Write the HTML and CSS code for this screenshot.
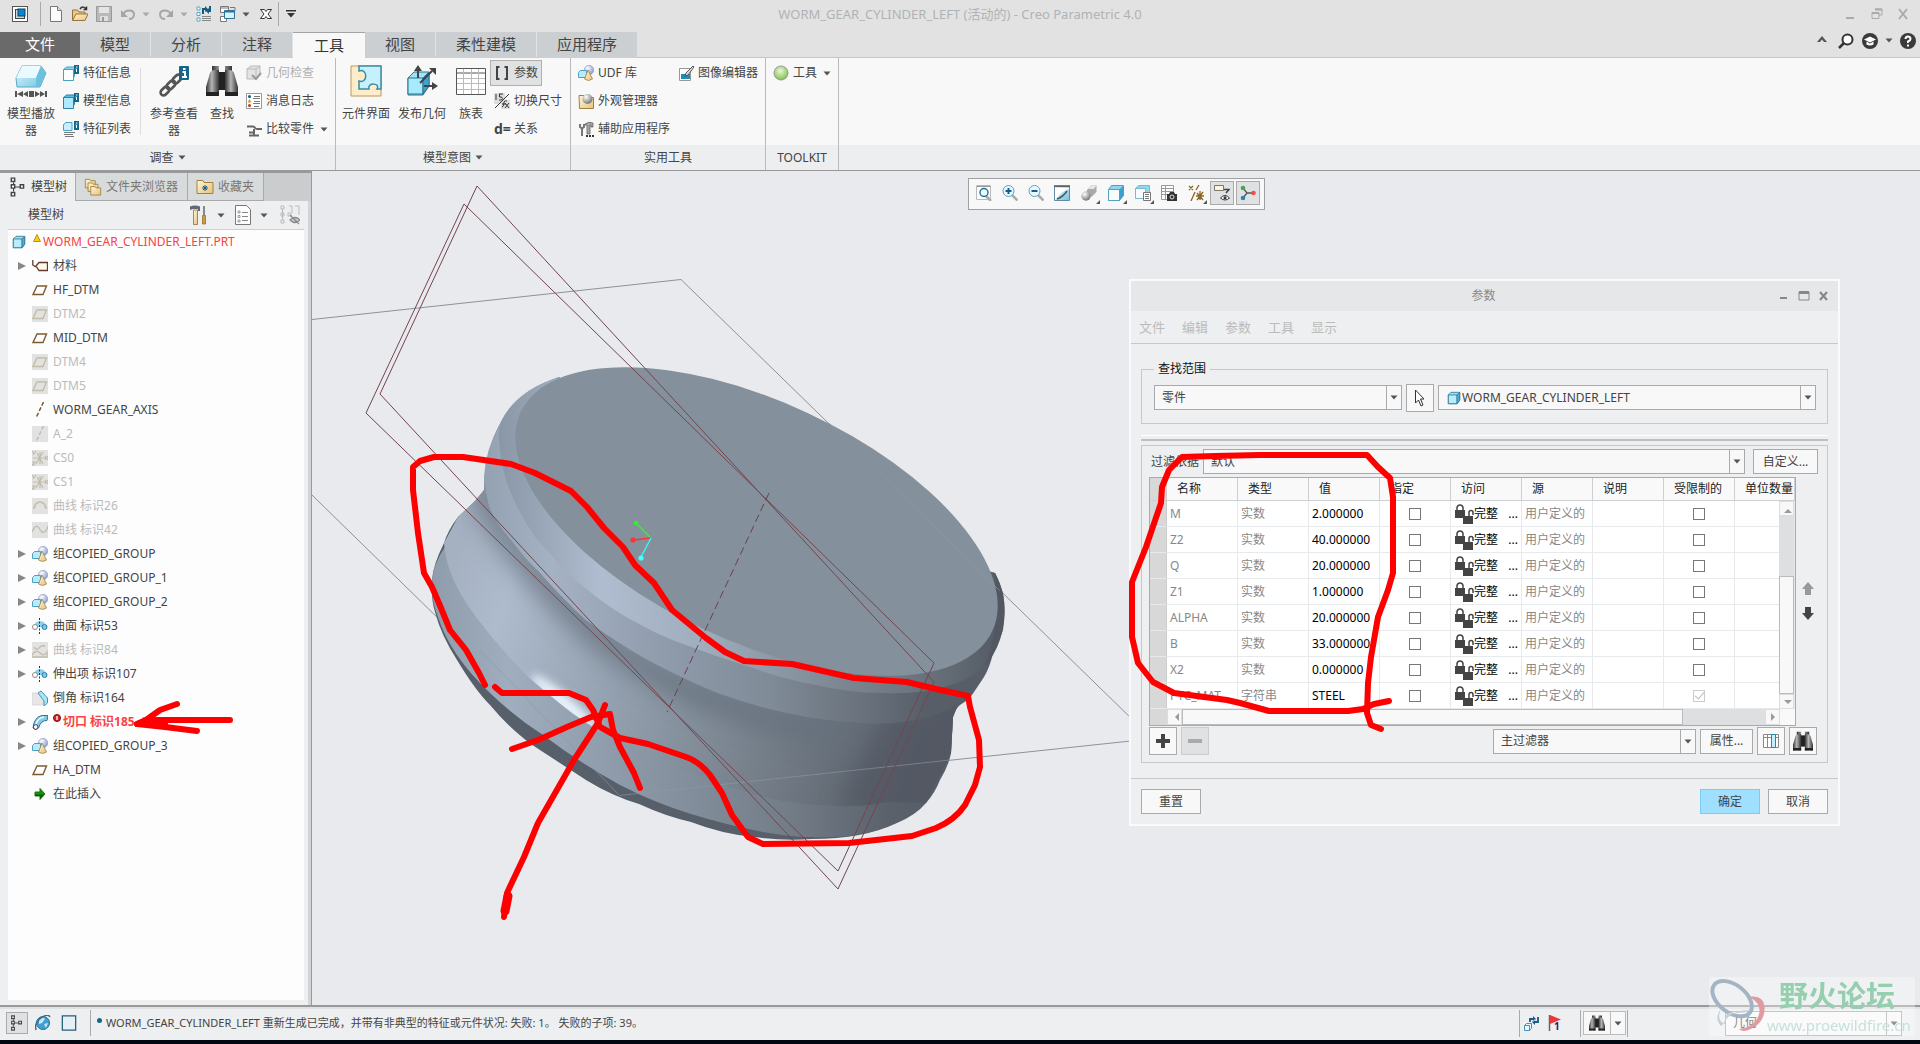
FILE: index.html
```html
<!DOCTYPE html>
<html lang="zh-CN">
<head>
<meta charset="utf-8">
<title>WORM_GEAR_CYLINDER_LEFT (活动的) - Creo Parametric 4.0</title>
<link rel="stylesheet" href="styles.css">
</head>
<body>
<svg class="defs" aria-hidden="true">
  <defs>
    <linearGradient id="gBlue" x1="0" y1="0" x2="1" y2="1"><stop offset="0" stop-color="#e4f8ff"/><stop offset="1" stop-color="#6fc4e4"/></linearGradient>
    <linearGradient id="gGold" x1="0" y1="0" x2="1" y2="1"><stop offset="0" stop-color="#fff6dc"/><stop offset="1" stop-color="#e6c27a"/></linearGradient>
    <linearGradient id="gDark" x1="0" y1="0" x2="1" y2="0"><stop offset="0" stop-color="#333"/><stop offset=".45" stop-color="#b5b5b5"/><stop offset="1" stop-color="#333"/></linearGradient>
    <radialGradient id="gBall" cx=".35" cy=".3" r=".8"><stop offset="0" stop-color="#fff"/><stop offset="1" stop-color="#7f93c8"/></radialGradient>
    <radialGradient id="gGrey" cx=".35" cy=".3" r=".8"><stop offset="0" stop-color="#fff"/><stop offset="1" stop-color="#666"/></radialGradient>
    <radialGradient id="gGreen" cx=".45" cy=".35" r=".7"><stop offset="0" stop-color="#e9f9d2"/><stop offset="1" stop-color="#79bb4a"/></radialGradient>
  </defs>
  <symbol id="app" viewBox="0 0 16 16"><rect x=".5" y=".5" width="15" height="15" fill="#fff" stroke="#555"/><rect x="3.5" y="3.5" width="9" height="9" fill="#cfd6da" stroke="#444"/><rect x="6" y="3" width="7" height="7" fill="#0a84d6" stroke="#045"/></symbol>
  <symbol id="new" viewBox="0 0 16 16"><path d="M2.500.5h7l4 4v11h-11z" fill="#fafbfc" stroke="#777"/><path d="M9.500.5v4h4" fill="#dde2e6" stroke="#777"/></symbol>
  <symbol id="open" viewBox="0 0 16 16"><path d="M.5 14V4h5l1.500 2h6v8z" fill="#e8c98a" stroke="#9a7436"/><path d="M.5 14.500 4 8h12l-3 6.500z" fill="url(#gGold)" stroke="#9a7436"/><path d="M8 3c2-3 5-2 6 0M14.500.5v3h-3" fill="none" stroke="#333" stroke-width="1.500"/></symbol>
  <symbol id="save" viewBox="0 0 16 16"><path d="M.5.5h15v15h-15z" fill="#b9b9b9" stroke="#999"/><path d="M3 1h10v6H3z" fill="#e4e4e4"/><path d="M4 10h8v5H4z" fill="#dedede"/><path d="M6 11h2v4H6z" fill="#999"/></symbol>
  <symbol id="undo" viewBox="0 0 16 16"><path d="M3 8.500C5 3 14 3 14 8.500c0 3-2.500 4.500-5 4.500" fill="none" stroke="#a3a6a8" stroke-width="2"/><path d="M1 4v7h7z" fill="#a3a6a8"/></symbol>
  <symbol id="regen" viewBox="0 0 16 16"><path d="M1 1h3v3H1zM1 6.500h3v3H1zM1 12h3v3H1z" fill="#fff" stroke="#55a8c8"/><path d="M6 10.500h9M6 12.500h9M6 14.500h9" stroke="#888"/><path d="M7 8V3h3M14 0v5h-3" fill="none" stroke="#155a80" stroke-width="2"/><path d="m9 0 3 3-3 3zM13 2l-3 3 3 3z" fill="#155a80"/></symbol>
  <symbol id="wins" viewBox="0 0 16 16"><path d="M.5.5h8v6h-8zM.5 10.500h6v5h-6z" fill="#fff" stroke="#777"/><path d="M10 1.500h5v3M.5 2h8" fill="none" stroke="#777"/><path d="M4.500 4.500h10v8h-10z" fill="#d9f3fc" stroke="#2e7595"/><path d="M4.500 5.500h10" stroke="#2e7595" stroke-width="2"/></symbol>
  <symbol id="xbox" viewBox="0 0 12 12"><path d="M.5 1.500h4l1.500 2 1.500-2h4L8 6l3.500 4.500h-4L6 8.500l-1.500 2h-4L4 6z" fill="#fff" stroke="#333"/></symbol>
  <symbol id="down" viewBox="0 0 8 5"><path d="M.5.5h7L4 4.500z" fill="currentColor"/></symbol>
  <symbol id="downbar" viewBox="0 0 10 8"><path d="M0 0h10v1.500H0zM1 3h8L5 7.500z" fill="#333"/></symbol>
  <symbol id="box" viewBox="0 0 16 16"><path d="m1.500 4.500 3-3h10v9l-3 4h-10z" fill="#9fe0f6" stroke="#3a7a98"/><path d="M1.500 4.500h10v10h-10z" fill="#b9edfd" stroke="#3a7a98"/><path d="m11.500 4.500 3-3v9l-3 4z" fill="#4fb0d8" stroke="#3a7a98"/></symbol>
  <symbol id="inf" viewBox="0 0 16 16"><path d="m.5 4.500 3-2.500h8v9l-2.500 4.500H.5z" fill="#8fd4ee" stroke="#48a0c4"/><path d="M.5 4.500h10v11H.5z" fill="#fdfeff" stroke="#48a0c4"/><rect x="11" width="5" height="9" fill="#16658a"/><path d="M13 2h1.500M12.500 4h1v3" stroke="#fff"/></symbol>
  <symbol id="inf2" viewBox="0 0 16 16"><path d="m.5 4.500 3-2.500h8v9l-2.500 4.500H.5z" fill="#5bbbe0" stroke="#2e83a6"/><path d="M.5 4.500h10v11H.5z" fill="#aeeafc" stroke="#2e83a6"/><rect x="11" width="5" height="9" fill="#16658a"/><path d="M13 2h1.500M12.500 4h1v3" stroke="#fff"/></symbol>
  <symbol id="inf3" viewBox="0 0 16 16"><path d="M.5 3.500 3 1.500h6v8H.5z" fill="#c8eefa" stroke="#48a0c4"/><path d="M1 11.500h11M1 13.500h9M2 15.500h9" stroke="#777"/><rect x="11" width="5" height="9" fill="#16658a"/><path d="M13 2h1.500M12.500 4h1v3" stroke="#fff"/></symbol>
  <symbol id="player" viewBox="0 0 32 32"><path d="M1 13 7 1h19l5 7-6 14H2z" fill="url(#gBlue)" stroke="#5ba9c6"/><path d="m1 13 6-12h19l-5 12z" fill="#eafaff"/><path d="M21 13 26 1l5 7-6 14h-4z" fill="#6cc1de"/><path d="M1 26v6M31 26v6" stroke="#555" stroke-width="2"/><path d="M2 29l6-3v6zM8 29l5-3v6zM14 26h5v6h-5zM30 29l-5-3v6zM25 29l-5-3v6z" fill="#555"/></symbol>
  <symbol id="chain" viewBox="0 0 32 32"><g fill="none" stroke="#555" stroke-width="2.600"><rect x="-5" y="-3" width="10" height="6" rx="3" transform="translate(7 26) rotate(-45)"/><rect x="-5" y="-3" width="10" height="6" rx="3" transform="translate(13 20) rotate(-45)"/><rect x="-5" y="-3" width="10" height="6" rx="3" transform="translate(19 14) rotate(-45)"/></g><rect x="21" y="1" width="10" height="14" rx="1" fill="#16658a"/><path d="M25 4h2.500M24.500 7H27v5M24 12h5" stroke="#fff" stroke-width="2" fill="none"/></symbol>
  <symbol id="bino" viewBox="0 0 32 32"><path d="M6 1h7v6H6zM19 1h7v6h-7z" fill="url(#gDark)"/><path d="M12 7h8v18h-8z" fill="#222"/><path d="M4 8q1-3 5-3h4v26H0V22z" fill="url(#gDark)"/><path d="M28 8q-1-3-5-3h-4v26h13V22z" fill="url(#gDark)"/><path d="M0 27h13v4H0zM19 27h13v4H19z" fill="#222"/></symbol>
  <symbol id="check3d" viewBox="0 0 16 16"><path d="m1 4 4-3h9v8l-4 5H1z" fill="#e4e4e4" stroke="#b9b9b9"/><path d="M1 4h9v9M10 4l4-3" fill="none" stroke="#b9b9b9"/><path d="m6 10 4 4 5-6" fill="none" stroke="#999" stroke-width="2"/></symbol>
  <symbol id="log" viewBox="0 0 16 16"><path d="M.5.5h15v15H.5z" fill="#fff" stroke="#999"/><circle cx="3.500" cy="3.500" r="1.500" fill="#155a80"/><path d="m3.500 6 2 3.500h-4z" fill="#e09a10"/><circle cx="3.500" cy="12.500" r="1.500" fill="#b33"/><path d="M8 3.500h6M7 5.500h7M8 8.500h6M7 10.500h7M8 13.500h5" stroke="#777"/></symbol>
  <symbol id="cmp" viewBox="0 0 16 16"><path d="M1 5.500h6c2 0 2 2.500 4 2.500h5M3 11.500h5M8 8v6M3 14.500h10" fill="none" stroke="#666" stroke-width="2"/></symbol>
  <symbol id="puzzle" viewBox="0 0 32 32"><path d="M1 1h30v30H1z" fill="#ffecc8" stroke="#b99a5c"/><path d="M9 1h22v23h-4c4-6-10-7-8 0H9v-8c9 3 9-13 0-10z" fill="#c5f0fc" stroke="#3a8aa8" stroke-width="1.500"/></symbol>
  <symbol id="pub" viewBox="0 0 32 32"><path d="m2 13 6-6h15v14l-6 9H2z" fill="#9fe3f7" stroke="#2d7390"/><path d="M2 13h15v16H2z" fill="#a6eafb" stroke="#2d7390"/><path d="m17 13 6-6v14l-6 8z" fill="#3fa3cf" stroke="#2d7390"/><path d="M12 13V4M14 18 26 6M18 21h11" stroke="#444" stroke-width="2"/><path d="M8 6l4-6 4 6zM23 3h7v7zM26 17l6 4-6 4z" fill="#444"/></symbol>
  <symbol id="table" viewBox="0 0 32 32"><path d="M1.500 3.500h29v26h-29z" fill="#fff" stroke="#555"/><path d="M1.500 8h29" stroke="#555"/><path d="M2 13.500h28M2 18.500h28M2 24.500h28M8.500 4v25M16.500 4v25M23.500 4v25" stroke="#bbb"/></symbol>
  <symbol id="brk" viewBox="0 0 16 16"><path d="M5.500 2H3v12h2.500M10.500 2H13v12h-2.500" fill="none" stroke="#444" stroke-width="2"/></symbol>
  <symbol id="dim" viewBox="0 0 16 16"><path d="M0 0h11v11H0zM7 7h9v9H7z" fill="#ddd"/><path d="M2 1v6M5 1h4M5.500 1v3h2q2 2 0 3H5M1 15 15 1M8 14q2 0 2-5 1-2 3-1M8 11h4M11 10l4 5M15 10l-4 5" fill="none" stroke="#333"/></symbol>
  <symbol id="cones" viewBox="0 0 16 16"><circle cx="11" cy="5" r="4.700" fill="url(#gBall)" stroke="#8391bb" stroke-width=".6"/><path d="m.5 7.500 2-2h6v7h-8z" fill="#b5ebfb" stroke="#4fa0c0"/><path d="m10 5 4.500 9q-4 3-8 0z" fill="url(#gGold)" stroke="#a08040" stroke-width=".8"/></symbol>
  <symbol id="look" viewBox="0 0 16 16"><path d="M1 2.500h5v2h9.500v11h-14z" fill="url(#gGold)" stroke="#a08040"/><circle cx="9.500" cy="6" r="5" fill="url(#gGrey)"/></symbol>
  <symbol id="tools" viewBox="0 0 16 16"><path d="M2 3v3l2 1.500L6 6V3M4 7v8" fill="none" stroke="#777" stroke-width="2"/><path d="M7 3q4-3 8-1v4h-2V4h-1v9H9V4H7z" fill="#aaa" stroke="#555" stroke-width=".7"/><path d="M8 14h2v2H8zM11 14h2v2h-2zM14 14h2v2h-2z" fill="#333"/></symbol>
  <symbol id="imged" viewBox="0 0 16 16"><path d="M1.500 3.500h11v12h-11z" fill="#fff" stroke="#999"/><path d="M3 9h9v5H3z" fill="#258bb0"/><path d="M15 1 8 8l-1 3 3-1 6-8z" fill="#ddd" stroke="#555"/></symbol>
  <symbol id="orb" viewBox="0 0 16 16"><circle cx="8" cy="8" r="7" fill="url(#gGreen)" stroke="#999"/></symbol>
  <symbol id="treeic" viewBox="0 0 16 18"><path d="M4 5v8M5 9h5" stroke="#444"/><path d="M2 1h3v3H2zM2 7h3v3H2zM2 14h3v3H2zM10 7h3v3h-3z" fill="#fff" stroke="#444" stroke-width="1.300"/></symbol>
  <symbol id="folders" viewBox="0 0 20 20"><g fill="url(#gGold)" stroke="#a58140"><path d="M1.500 3V1.500h5l1 1.500h5v8h-11z"/><path d="M4.500 8V5.500h5l1 1.500h5v8h-11z"/><path d="M7.500 12V9.500h5l1 1.500h5v8h-11z"/></g></symbol>
  <symbol id="fav" viewBox="0 0 18 16"><path d="M1 3.500V1.500h6l1 2h9v11H1z" fill="url(#gGold)" stroke="#a58140"/><path d="M9 6v6M6 9h6M7 7l4 4M11 7l-4 4" stroke="#155a80"/></symbol>
  <symbol id="hammer" viewBox="0 0 16 20"><path d="M0 1.500q5-2 10 0V6H8V4H3L0 5z" fill="#667"/><path d="M3.500 5h4v14.500h-4z" fill="url(#gGold)" stroke="#94702f" stroke-width=".8"/><path d="M14 1v9" stroke="#888" stroke-width="2"/><path d="M12.500 10.500h3V19h-3z" fill="#d49b3c" stroke="#8a6420" stroke-width=".7"/></symbol>
  <symbol id="doc" viewBox="0 0 16 20"><path d="M.5.5h11l4 4v15H.5z" fill="#fff" stroke="#777"/><path d="M3 6h2v2H3zM3 10.500h2v2H3zM3 15h2v2H3z" fill="none" stroke="#888" stroke-width=".8"/><path d="M7 7.500h6M7 11.500h6M7 15.500h6" stroke="#888"/></symbol>
  <symbol id="hide" viewBox="0 0 20 20"><path d="M1 1h3v3H1zM1 8h3v3H1zM1 15h3v3H1zM8 8h3v3H8zM2.500 4v11M9 1h3v3M15 1h4v9M12 4v4" fill="none" stroke="#bbb"/><path d="M10 15q5-5 10 0-5 5-10 0zM10 10l9 9" fill="#ccc" stroke="#888" stroke-width="1.200"/></symbol>
  <symbol id="tag" viewBox="0 0 16 16"><path d="M.8 2v5l3 2M4 8l3-3.500h8.500v8H7z" fill="#fff9e8" stroke="#643a30" stroke-width="1.300"/></symbol>
  <symbol id="plane" viewBox="0 0 16 16"><path d="M5 4h9.500L11 12.500H1z" fill="none" stroke="currentColor" stroke-width="1.400"/></symbol>
  <symbol id="axis" viewBox="0 0 16 16"><path d="M11.500 0 4 16" fill="none" stroke="currentColor" stroke-width="1.500" stroke-dasharray="4 2"/></symbol>
  <symbol id="csys" viewBox="0 0 16 16"><path d="M8 2v12M1 8h14M4 14l7-12M5 3l6 11M0 1l2 3M4 1 1 5M13 6l3 4M16 6l-3 4M0 12h3l-3 3h3" fill="none" stroke="currentColor" stroke-width="1.200"/></symbol>
  <symbol id="arcic" viewBox="0 0 16 16"><path d="M2 11Q3 4 8 4t6 7" fill="none" stroke="currentColor" stroke-width="1.700"/></symbol>
  <symbol id="wave" viewBox="0 0 16 16"><path d="M0 10Q4 1 7 6t4 4q3 1 5-6" fill="none" stroke="currentColor" stroke-width="1.400"/></symbol>
  <symbol id="waves" viewBox="0 0 16 16"><path d="M2 5q3 4 5 1t6-2M0 13q4-6 8-2t7-1v5H0z" fill="none" stroke="currentColor" stroke-width="1.300"/></symbol>
  <symbol id="mirror" viewBox="0 0 16 16"><path d="M3 5q5-4 10 0l-2 4H5z" fill="#8fd0ea"/><circle cx="3" cy="9" r="2.500" fill="#fff" stroke="#888"/><circle cx="12.500" cy="9" r="2.500" fill="#7cc9ea" stroke="#1f7fa8"/><path d="M7.500 0v16" stroke="#333" stroke-dasharray="2 1.500"/></symbol>
  <symbol id="chamfer" viewBox="0 0 16 16"><path d="M0 3h7l5 7v5H0z" fill="#e6e6e6" stroke="#ccc" stroke-width=".6"/><path d="m6 3 3-2 6.500 7v5L12 16v-5z" fill="#a9e4f8" stroke="#4795b2"/></symbol>
  <symbol id="sweep" viewBox="0 0 16 16"><path d="M1 14Q2 3 10 1.500h6l-1 5Q9 6 6.500 14q-3 3-5.500 0z" fill="#86c9e3" stroke="#34728f"/><path d="M4 10Q6 4 12 3" stroke="#e6f8ff" stroke-width="1.500" fill="none"/><circle cx="3.700" cy="13" r="2.300" fill="#fff" stroke="#446"/></symbol>
  <symbol id="insert" viewBox="0 0 16 16"><path d="M3 6h5V2.500L13 8l-5 5.500V10H3z" fill="#0b9a0b" stroke="#2d6a10"/><path d="M3 8.500h9l-4 4.500V10H3z" fill="#0c5a0c"/></symbol>
  <symbol id="exp" viewBox="0 0 8 10"><path d="m0 1 8 4-8 4z" fill="#888"/></symbol>
  <symbol id="warn" viewBox="0 0 8 8"><path d="m4 .5 3.500 7h-7z" fill="#fc0" stroke="#a07000" stroke-width=".7"/></symbol>
  <symbol id="err" viewBox="0 0 8 8"><circle cx="4" cy="4" r="3.500" fill="#d22" stroke="#701010"/><path d="M4 2v4" stroke="#fff" stroke-width="1.300"/></symbol>
  <symbol id="zfit" viewBox="0 0 16 16"><path d="M.5 1.500h14v13H.5z" fill="#fff" stroke="#bbb"/><path d="M.5 1h14" stroke="#777"/><path d="m10 11 5 5" stroke="#aaa" stroke-width="2.500"/><circle cx="8" cy="7.500" r="4" fill="#eefaff" stroke="#1f6e90" stroke-width="1.400"/></symbol>
  <symbol id="zin" viewBox="0 0 16 16"><path d="m10 10 5.500 5.500" stroke="#aaa" stroke-width="2.500"/><circle cx="6.500" cy="6" r="5.500" fill="#e9f8fe" stroke="#5ba4c0"/><path d="M3.500 6h6M6.500 3v6" stroke="#15608a" stroke-width="2"/></symbol>
  <symbol id="zout" viewBox="0 0 16 16"><path d="m10 10 5.500 5.500" stroke="#aaa" stroke-width="2.500"/><circle cx="6.500" cy="6" r="5.500" fill="#e9f8fe" stroke="#5ba4c0"/><path d="M3.500 6h6" stroke="#15608a" stroke-width="2"/></symbol>
  <symbol id="repaint" viewBox="0 0 16 16"><path d="M.5 1.500h15v14H.5z" fill="url(#gBlue)" stroke="#5a8fa5"/><path d="M1 3h14v1Q8 6 3 13l-2 2z" fill="#fff"/><path d="M0 1h16M3 14Q9 12 13 6" stroke="#555" fill="none" stroke-width="1.500"/></symbol>
  <symbol id="shade" viewBox="0 0 16 16"><path d="M6 8V5l4-4.500h5.500V7l-5 5z" fill="#a9a9a9"/><path d="M7 4 10 .5h5.500L13 4z" fill="#e6e6e6"/><circle cx="5" cy="11" r="4.700" fill="url(#gGrey)"/></symbol>
  <symbol id="cube" viewBox="0 0 16 16"><path d="m.5 4.500 3-4h12v10l-4 5H.5z" fill="#8fd6ee" stroke="#52a3c2"/><path d="M.5 4.500h11v11H.5z" fill="#f8fcfe" stroke="#52a3c2"/><path d="m11.500 4.500 4-4v10l-4 5z" fill="#3f9fca"/></symbol>
  <symbol id="cubelist" viewBox="0 0 16 16"><path d="m.5 3.500 3-3h11v9l-3 3H.5z" fill="#8fd6ee" stroke="#7bb9d0"/><path d="M.5 3.500h10v10H.5z" fill="#f8fcfe" stroke="#7bb9d0"/><path d="M8.500 7.500h7v8h-7z" fill="#fff" stroke="#777"/><path d="M10 9.500h4M10 11.500h4M10 13.500h4" stroke="#777"/></symbol>
  <symbol id="cam" viewBox="0 0 16 16"><path d="M.5.5h12v14H.5zM.5 3.500h12M.5 6.500h12M.5 9.500h12M4.500.5v14" fill="#fff" stroke="#999"/><path d="M6 9h2l1-2h4l1 2h2v7H6z" fill="#333"/><circle cx="11" cy="12" r="2" fill="#333" stroke="#ddd"/></symbol>
  <symbol id="datum" viewBox="0 0 16 16"><path d="M1 1l4 4M5 1 1 5M11 0 8 5M7 7l-4 9M9 8l6 7M15 7l-6 8M8 11h8M12 6v9" fill="none" stroke="#8a6420" stroke-width="1.300"/></symbol>
  <symbol id="annot" viewBox="0 0 16 16"><path d="M.5.5h9v5h-9z" fill="#fff6d8" stroke="#777"/><path d="M10 4.500h5L12 8" fill="none" stroke="#444" stroke-width="1.500"/><path d="M6.500 13q4.500-5 9 0-4.500 4-9 0z" fill="#fff" stroke="#333"/><circle cx="11" cy="12.800" r="1.500" fill="#333"/></symbol>
  <symbol id="spin" viewBox="0 0 16 16"><path d="m3 3 4 5-4 5M7 8h6" fill="none" stroke="#555" stroke-width="1.300"/><circle cx="3" cy="3" r="2.300" fill="#4da64d"/><circle cx="3" cy="13" r="2.300" fill="#3181a8"/><circle cx="13.500" cy="8" r="2.300" fill="#e8514f"/></symbol>
  <symbol id="globe" viewBox="0 0 16 16"><circle cx="8" cy="8" r="6.500" fill="#3f9fd2" stroke="#276c96"/><path d="M4 5q4-4 6-1l-3 4-3 1zM9 9l4-1-2 5z" fill="#c5e6f6"/><path d="M1 15Q-1 8 6 3t9-1" fill="none" stroke="#3a6d88" stroke-width="1.500"/></symbol>
  <symbol id="sheet" viewBox="0 0 16 18"><path d="M.5 1h15v16H.5z" fill="#e4f0f6" stroke="#255d78" stroke-width="1.400"/></symbol>
  <symbol id="sync" viewBox="0 0 16 16"><path d="m.5 10.500 2-2h5v5l-2 2h-5zM.5 10.500h5v5" fill="#e6f8ff" stroke="#4795b2"/><path d="M6 7V4h4M14 2v5h-4" stroke="#155a80" stroke-width="1.800" fill="none"/><path d="m9 1 3 3-3 3zM11 4 8 7l3 3z" fill="#155a80"/></symbol>
  <symbol id="flag" viewBox="0 0 14 16"><path d="M1.500 0v16" stroke="#666" stroke-width="1.500"/><path d="m2 0 11 4.500L2 9z" fill="#e83a38"/></symbol>
  <symbol id="ptr" viewBox="0 0 12 18"><path d="m1.500 1 8.500 9H6.500l2.500 6-2 1-2.500-6-3 3z" fill="#fff" stroke="#333"/></symbol>
  <symbol id="locks" viewBox="0 0 20 20"><path d="M1 6h10v8H1zM9 12h10v8H9z" fill="#444"/><path d="M3 7V3.500Q3.500 1 6 1t3 2.500V7M15 13V8.500q0-2 2-2t2 2V11" fill="none" stroke="#444" stroke-width="1.500"/></symbol>
  <symbol id="up" viewBox="0 0 12 14"><path d="m6 0 6 7H9v6H3V7H0z" fill="currentColor"/></symbol>
  <symbol id="cols" viewBox="0 0 16 16"><path d="M.5 1.500h15v13H.5z" fill="#fff" stroke="#888"/><path d="M.5 4.500h15M4.500 1v13" stroke="#888"/><path d="M8.500 1.500h4v13h-4z" fill="#c4efff" stroke="#1e88b4"/></symbol>
</svg>

<div class="app">
  <header class="titlebar">
    <div class="quick">
      <button class="q" aria-label="应用"><svg><use href="#app"/></svg></button><i class="bar"></i>
      <button class="q" aria-label="新建"><svg><use href="#new"/></svg></button>
      <button class="q" aria-label="打开"><svg><use href="#open"/></svg></button>
      <button class="q" aria-label="保存"><svg><use href="#save"/></svg></button>
      <button class="q" aria-label="撤消"><svg><use href="#undo"/></svg></button><svg class="arr dim"><use href="#down"/></svg>
      <button class="q flip" aria-label="重做"><svg><use href="#undo"/></svg></button><svg class="arr dim"><use href="#down"/></svg>
      <button class="q" aria-label="重新生成"><svg><use href="#regen"/></svg></button>
      <button class="q" aria-label="窗口"><svg><use href="#wins"/></svg></button><svg class="arr"><use href="#down"/></svg>
      <button class="q" aria-label="关闭"><svg class="s12"><use href="#xbox"/></svg></button><i class="bar end"></i>
      <button class="q more" aria-label="自定义"><svg class="s10"><use href="#downbar"/></svg></button>
    </div>
    <h1>WORM_GEAR_CYLINDER_LEFT (活动的) - Creo Parametric 4.0</h1>
    <div class="winctl">
      <svg viewBox="0 0 12 12"><path d="M1 9h8v2H1z" fill="#aaa"/></svg>
      <svg viewBox="0 0 12 12"><path d="M4 1h7v6H8M1 4.500h7v6H1z" fill="none" stroke="#aaa"/><path d="M4 1.500h7M1 5h7" stroke="#aaa" stroke-width="2"/></svg>
      <svg viewBox="0 0 12 12"><path d="m2 1 8 10M10 1 2 11" stroke="#aaa" stroke-width="2"/></svg>
    </div>
  </header>

  <nav class="tabs">
    <button class="tab file">文件</button><button class="tab">模型</button><button class="tab">分析</button><button class="tab">注释</button><button class="tab on">工具</button><button class="tab">视图</button><button class="tab wide">柔性建模</button><button class="tab wide">应用程序</button>
    <div class="help">
      <svg viewBox="0 0 16 16"><path d="m3 9 5-6 5 6h-3L8 6.500 6 9z" fill="#555"/></svg>
      <svg viewBox="0 0 16 16"><circle cx="9.500" cy="6.500" r="5" fill="#fff" stroke="#333" stroke-width="2"/><path d="m6 10-5 5" stroke="#333" stroke-width="2.500"/></svg>
      <svg viewBox="0 0 16 16"><circle cx="8" cy="8" r="8" fill="#3a3a3a"/><path d="m2 6.500 6-3 6 3-6 3z" fill="#fff"/><path d="M4.500 8.500v3q3.500 2 7 0v-3L8 10.500z" fill="#fff"/></svg>
      <svg class="arr"><use href="#down"/></svg>
      <svg viewBox="0 0 16 16"><circle cx="8" cy="8" r="8" fill="#3a3a3a"/><path d="M5.500 6q0-2.500 2.500-2.500T10.500 6q0 1.500-2.500 2.500V10" fill="none" stroke="#fff" stroke-width="2"/><path d="M7 11.500h2v2H7z" fill="#fff"/></svg>
    </div>
  </nav>

  <section class="ribbon">
    <div class="group g1">
      <div class="gbody">
        <button class="big first"><svg><use href="#player"/></svg><span>模型播放器</span></button>
        <div class="col c1"><button class="it"><svg><use href="#inf"/></svg>特征信息</button><button class="it"><svg><use href="#inf2"/></svg>模型信息</button><button class="it"><svg><use href="#inf3"/></svg>特征列表</button></div>
        <i class="vsep"></i>
        <button class="big ref"><svg><use href="#chain"/></svg><span>参考查看器</span></button>
        <button class="big find"><svg><use href="#bino"/></svg><span>查找</span></button>
        <div class="col c2"><button class="it" disabled><svg><use href="#check3d"/></svg>几何检查</button><button class="it"><svg><use href="#log"/></svg>消息日志</button><button class="it"><svg><use href="#cmp"/></svg>比较零件<svg class="arr"><use href="#down"/></svg></button></div>
      </div>
      <div class="glabel">调查<svg class="arr"><use href="#down"/></svg></div>
    </div>
    <div class="group g2">
      <div class="gbody">
        <button class="big b60"><svg><use href="#puzzle"/></svg><span>元件界面</span></button>
        <button class="big b52"><svg><use href="#pub"/></svg><span>发布几何</span></button>
        <button class="big b42"><svg><use href="#table"/></svg><span>族表</span></button>
        <div class="col"><button class="it sel-on"><svg><use href="#brk"/></svg>参数</button><button class="it"><svg><use href="#dim"/></svg>切换尺寸</button><button class="it"><b>d=</b>关系</button></div>
      </div>
      <div class="glabel">模型意图<svg class="arr"><use href="#down"/></svg></div>
    </div>
    <div class="group g3">
      <div class="gbody">
        <div class="col u1"><button class="it"><svg><use href="#cones"/></svg>UDF 库</button><button class="it"><svg><use href="#look"/></svg>外观管理器</button><button class="it"><svg><use href="#tools"/></svg>辅助应用程序</button></div>
        <div class="col"><button class="it"><svg><use href="#imged"/></svg>图像编辑器</button></div>
      </div>
      <div class="glabel">实用工具</div>
    </div>
    <div class="group g4">
      <div class="gbody"><div class="col u4"><button class="it"><svg><use href="#orb"/></svg>工具<svg class="arr"><use href="#down"/></svg></button></div></div>
      <div class="glabel">TOOLKIT</div>
    </div>
    <div class="group rest"><div class="gbody"></div><div class="glabel"></div></div>
  </section>

  <main class="work">
    <aside class="side">
      <div class="stabs">
        <button class="stab on"><svg class="t"><use href="#treeic"/></svg>模型树</button><button class="stab f"><svg><use href="#folders"/></svg>文件夹浏览器</button><button class="stab v"><svg><use href="#fav"/></svg>收藏夹</button>
      </div>
      <div class="shead"><span>模型树</span>
        <svg class="i20 w"><use href="#hammer"/></svg><svg class="arr"><use href="#down"/></svg><svg class="i20"><use href="#doc"/></svg><svg class="arr"><use href="#down"/></svg><svg class="i20 h"><use href="#hide"/></svg>
      </div>
      <ul class="tree">
        <li class="root"><svg class="ic"><use href="#box"/></svg><svg class="mark"><use href="#warn"/></svg>WORM_GEAR_CYLINDER_LEFT.PRT</li>
        <li class="x"><svg class="ex"><use href="#exp"/></svg><svg class="ic"><use href="#tag"/></svg>材料</li>
        <li><svg class="ic"><use href="#plane"/></svg>HF_DTM</li>
        <li class="off"><svg class="ic"><use href="#plane"/></svg>DTM2</li>
        <li><svg class="ic"><use href="#plane"/></svg>MID_DTM</li>
        <li class="off"><svg class="ic"><use href="#plane"/></svg>DTM4</li>
        <li class="off"><svg class="ic"><use href="#plane"/></svg>DTM5</li>
        <li><svg class="ic"><use href="#axis"/></svg>WORM_GEAR_AXIS</li>
        <li class="off"><svg class="ic"><use href="#axis"/></svg>A_2</li>
        <li class="off"><svg class="ic"><use href="#csys"/></svg>CS0</li>
        <li class="off"><svg class="ic"><use href="#csys"/></svg>CS1</li>
        <li class="off"><svg class="ic"><use href="#arcic"/></svg>曲线 标识26</li>
        <li class="off"><svg class="ic"><use href="#wave"/></svg>曲线 标识42</li>
        <li class="x"><svg class="ex"><use href="#exp"/></svg><svg class="ic"><use href="#cones"/></svg>组COPIED_GROUP</li>
        <li class="x"><svg class="ex"><use href="#exp"/></svg><svg class="ic"><use href="#cones"/></svg>组COPIED_GROUP_1</li>
        <li class="x"><svg class="ex"><use href="#exp"/></svg><svg class="ic"><use href="#cones"/></svg>组COPIED_GROUP_2</li>
        <li class="x"><svg class="ex"><use href="#exp"/></svg><svg class="ic"><use href="#mirror"/></svg>曲面 标识53</li>
        <li class="x off"><svg class="ex"><use href="#exp"/></svg><svg class="ic"><use href="#waves"/></svg>曲线 标识84</li>
        <li class="x"><svg class="ex"><use href="#exp"/></svg><svg class="ic"><use href="#mirror"/></svg>伸出项 标识107</li>
        <li><svg class="ic"><use href="#chamfer"/></svg>倒角 标识164</li>
        <li class="x bad"><svg class="ex"><use href="#exp"/></svg><svg class="ic"><use href="#sweep"/></svg><svg class="mark"><use href="#err"/></svg>切口 标识185</li>
        <li class="x"><svg class="ex"><use href="#exp"/></svg><svg class="ic"><use href="#cones"/></svg>组COPIED_GROUP_3</li>
        <li><svg class="ic"><use href="#plane"/></svg>HA_DTM</li>
        <li><svg class="ic"><use href="#insert"/></svg>在此插入</li>
      </ul>
    </aside>

    <section class="view">
      <svg class="scene" aria-hidden="true">
        <defs>
          <linearGradient id="cham" gradientUnits="userSpaceOnUse" x1="500" y1="0" x2="1005" y2="0"><stop offset="0" stop-color="#8997a7"/><stop offset=".2" stop-color="#b0bdd0"/><stop offset=".4" stop-color="#a0adbd"/><stop offset=".65" stop-color="#7f8a96"/><stop offset=".85" stop-color="#68717b"/><stop offset="1" stop-color="#525963"/></linearGradient>
          <linearGradient id="cyl" gradientUnits="userSpaceOnUse" x1="484" y1="0" x2="1005" y2="0"><stop offset="0" stop-color="#94a1b1"/><stop offset=".13" stop-color="#a5b2c4"/><stop offset=".35" stop-color="#8f9bab"/><stop offset=".55" stop-color="#7f8b97"/><stop offset=".75" stop-color="#666e79"/><stop offset=".85" stop-color="#575e68"/></linearGradient>
          <linearGradient id="groove" gradientUnits="userSpaceOnUse" x1="440" y1="600" x2="920" y2="770"><stop offset="0" stop-color="#a5b1c1"/><stop offset=".12" stop-color="#aebbcd"/><stop offset=".35" stop-color="#97a4b3"/><stop offset=".6" stop-color="#7f8a96"/><stop offset=".85" stop-color="#666e78"/><stop offset="1" stop-color="#565d67"/></linearGradient>
          <linearGradient id="low" gradientUnits="userSpaceOnUse" x1="432" y1="0" x2="940" y2="0"><stop offset="0" stop-color="#8f9cab"/><stop offset=".15" stop-color="#9fadbe"/><stop offset=".45" stop-color="#8793a1"/><stop offset=".7" stop-color="#737d88"/><stop offset=".9" stop-color="#5a616b"/><stop offset="1" stop-color="#555c66"/></linearGradient>
          <filter id="soft" x="-40%" y="-40%" width="180%" height="180%"><feGaussianBlur stdDeviation="12"/></filter>
          <filter id="glow" x="-60%" y="-60%" width="220%" height="220%"><feGaussianBlur stdDeviation="5"/></filter>
          <clipPath id="grooveClip"><path id="gshape" d="M484 477Q485 492 489 507Q497 525 511 540Q524 558 540 573Q560 596 586 620Q616 642 648 660Q682 678 715 692Q750 705 787 713Q823 721 859 723L960 700L953 717L951 753L926 803L888 802Q865 807 835 806Q798 805 763 797Q727 787 691 773Q653 761 620 743Q596 730 572 713Q546 693 524 673Q498 646 476 617Q452 585 446 557L444 543L458 517L473 503L484 490z"/></clipPath>
        </defs>
        <g transform="translate(-312 -171)">
          <path fill="none" stroke="#8e919c" d="M312 319.500 681 279.500 1135 722M312 495 619.500 795.500 1140 740"/>
          <path fill="#57606a" d="M559 377C530 387 513 400 501 422Q485 450 484 490Q478 500 473 503L458 517Q448 530 444 543Q433 565 432 580Q431 600 435 612Q441 635 457 660Q475 690 490 705Q515 735 543 752Q563 765 586 780Q612 796 639 804Q665 816 691 822Q722 834 754 837Q785 841 811 839Q838 839 859 835Q880 831 897 823Q916 815 926 803Q935 793 940 780Q949 765 951 753L953 717Q955 709 960 705Q967 701 972 695L984 677Q990 667 993 653Q1000 640 1003 630Q1006 612 1003 593Q1000 583 995 573L756 520z"/>
          <path fill="url(#low)" d="M446 545Q433 565 432 580Q431 600 438 617Q450 655 490 693Q515 717 543 735Q580 763 620 785Q655 803 691 814Q727 825 763 832Q790 837 811 837Q840 838 859 834Q880 831 897 822L926 800L907 760L446 550z"/>
          <use href="#gshape" fill="url(#groove)"/>
          <g clip-path="url(#grooveClip)">
            <path d="M480 480Q490 530 586 625Q640 672 720 702T860 733" fill="none" stroke="#65707c" stroke-width="26" opacity=".8" filter="url(#soft)"/>
            <path d="M840 800 900 700H990V830H870z" fill="#525963" opacity=".8" filter="url(#soft)"/>
            <ellipse cx="565" cy="704" rx="44" ry="8" fill="#eaf4ff" transform="rotate(40 565 704)" filter="url(#glow)"/>
          </g>
          <path fill="url(#cyl)" d="M501 422Q485 450 484 477Q485 492 489 507Q497 525 511 540Q524 558 540 573Q560 596 586 620Q616 642 648 660Q682 678 715 692Q750 705 787 713Q823 721 859 723Q925 728 968 698Q985 680 993 653L760 520z"/>
          <path fill="url(#cham)" d="M559 377C530 386 510 402 501 422Q498 430 499 437Q500 460 506 480Q515 508 535 537Q553 558 578 582Q610 610 643 626Q665 638 686 645Q715 656 744 665Q780 678 811 684Q850 693 883 693Q911 694 931 690Q950 686 964 680Q985 670 995 646Q1005 620 1003 600Q1001 585 995 573L756 500z"/>
          <path fill="#515861" d="M995 573Q1007 595 1004 620Q1002 640 993 655L985 667Q998 630 998 600z"/>
          <ellipse cx="756.500" cy="521.500" rx="260" ry="120" fill="#84909b" transform="rotate(24.900 756.500 521.500)"/>
          <path fill="none" stroke="#8f99a2" stroke-width="1" opacity=".6" d="m829 423 171 168M480 650 619.500 795.500 950 760"/>
          <path fill="none" stroke="#74454f" d="M464 204 366 413 838 871 934 663zM477 186 380 394 838 889 934 682z"/>
          <path fill="none" stroke="#6d4049" stroke-dasharray="8 4" d="M769 493 667 712"/>
          <g stroke-width="1.500" fill="none"><path stroke="#4be04b" d="m651 538-15-15"/><path stroke="#f33" d="m651 538-17 2"/><path stroke="#40f0f5" d="m651 538-10 19"/></g>
          <circle cx="636" cy="523" r="2.300" fill="#3e3"/><circle cx="633" cy="540" r="2.600" fill="#f33"/><circle cx="641" cy="558" r="2.600" fill="#4ff"/>
        </g>
      </svg>

      <div class="vbar">
        <button aria-label="重新调整"><svg><use href="#zfit"/></svg></button><button aria-label="放大"><svg><use href="#zin"/></svg></button><button aria-label="缩小"><svg><use href="#zout"/></svg></button><button aria-label="重画"><svg><use href="#repaint"/></svg></button><button class="m" aria-label="渲染"><svg><use href="#shade"/></svg></button><button class="m" aria-label="显示样式"><svg><use href="#cube"/></svg></button><button class="m" aria-label="已保存方向"><svg><use href="#cubelist"/></svg></button><button aria-label="视图管理器"><svg><use href="#cam"/></svg></button><button class="m" aria-label="基准显示"><svg><use href="#datum"/></svg></button><button class="on" aria-label="注释显示"><svg><use href="#annot"/></svg></button><button class="on" aria-label="旋转中心"><svg><use href="#spin"/></svg></button>
      </div>

      <section class="dialog" role="dialog" aria-labelledby="dt">
        <header><h2 id="dt">参数</h2><div class="dctl">
          <svg viewBox="0 0 12 12"><path d="M2 7h7v2H2z" fill="#888"/></svg><svg viewBox="0 0 12 12"><path d="M1 2h10v8H1z" fill="none" stroke="#888"/><path d="M1 2.500h10" stroke="#888" stroke-width="3"/></svg><svg viewBox="0 0 12 12"><path d="m2 2 7 8M9 2l-7 8" stroke="#888" stroke-width="2.200"/></svg></div></header>
        <nav class="dmenu"><button>文件</button><button>编辑</button><button>参数</button><button>工具</button><button>显示</button></nav>
        <fieldset><legend>查找范围</legend>
          <div class="sel w1"><select aria-label="对象类型"><option>零件</option></select><svg class="arr"><use href="#down"/></svg></div>
          <button class="sq" aria-label="选择"><svg class="ptr"><use href="#ptr"/></svg></button>
          <div class="sel w2"><svg class="lead"><use href="#box"/></svg><select aria-label="对象"><option>WORM_GEAR_CYLINDER_LEFT</option></select><svg class="arr"><use href="#down"/></svg></div>
        </fieldset>
        <hr class="split">
        <div class="panel">
          <div class="filter"><label for="flt">过滤依据</label><div class="sel grow"><select id="flt"><option>默认</option></select><svg class="arr"><use href="#down"/></svg></div><button class="btn">自定义...</button></div>
          <div class="tarea">
            <div class="tframe">
              <table>
                <colgroup><col class="gut"><col><col><col><col><col><col><col><col><col class="last"></colgroup>
                <thead><tr><th></th><th>名称</th><th>类型</th><th>值</th><th>指定</th><th>访问</th><th>源</th><th>说明</th><th>受限制的</th><th>单位数量</th></tr></thead>
                <tbody>
                  <tr><td></td><td>M</td><td>实数</td><td class="v">2.000000</td><td class="c"><input type="checkbox" aria-label="指定"></td><td class="a"><div><svg><use href="#locks"/></svg>完整<span>...</span></div></td><td>用户定义的</td><td></td><td class="c"><input type="checkbox" aria-label="受限制的"></td><td></td></tr>
                  <tr><td></td><td>Z2</td><td>实数</td><td class="v">40.000000</td><td class="c"><input type="checkbox" aria-label="指定"></td><td class="a"><div><svg><use href="#locks"/></svg>完整<span>...</span></div></td><td>用户定义的</td><td></td><td class="c"><input type="checkbox" aria-label="受限制的"></td><td></td></tr>
                  <tr><td></td><td>Q</td><td>实数</td><td class="v">20.000000</td><td class="c"><input type="checkbox" aria-label="指定"></td><td class="a"><div><svg><use href="#locks"/></svg>完整<span>...</span></div></td><td>用户定义的</td><td></td><td class="c"><input type="checkbox" aria-label="受限制的"></td><td></td></tr>
                  <tr><td></td><td>Z1</td><td>实数</td><td class="v">1.000000</td><td class="c"><input type="checkbox" aria-label="指定"></td><td class="a"><div><svg><use href="#locks"/></svg>完整<span>...</span></div></td><td>用户定义的</td><td></td><td class="c"><input type="checkbox" aria-label="受限制的"></td><td></td></tr>
                  <tr><td></td><td>ALPHA</td><td>实数</td><td class="v">20.000000</td><td class="c"><input type="checkbox" aria-label="指定"></td><td class="a"><div><svg><use href="#locks"/></svg>完整<span>...</span></div></td><td>用户定义的</td><td></td><td class="c"><input type="checkbox" aria-label="受限制的"></td><td></td></tr>
                  <tr><td></td><td>B</td><td>实数</td><td class="v">33.000000</td><td class="c"><input type="checkbox" aria-label="指定"></td><td class="a"><div><svg><use href="#locks"/></svg>完整<span>...</span></div></td><td>用户定义的</td><td></td><td class="c"><input type="checkbox" aria-label="受限制的"></td><td></td></tr>
                  <tr><td></td><td>X2</td><td>实数</td><td class="v">0.000000</td><td class="c"><input type="checkbox" aria-label="指定"></td><td class="a"><div><svg><use href="#locks"/></svg>完整<span>...</span></div></td><td>用户定义的</td><td></td><td class="c"><input type="checkbox" aria-label="受限制的"></td><td></td></tr>
                  <tr><td></td><td>PTC_MAT</td><td>字符串</td><td class="v">STEEL</td><td class="c"><input type="checkbox" aria-label="指定"></td><td class="a"><div><svg><use href="#locks"/></svg>完整<span>...</span></div></td><td>用户定义的</td><td></td><td class="c"><input type="checkbox" aria-label="受限制的" checked disabled></td><td></td></tr>
                </tbody>
              </table>
              <div class="hsb"><i class="gutf"></i><i class="cap l"></i><i class="thumb"></i><i class="cap r"></i><i class="corner"></i></div>
              <div class="vsb"><i class="cap u"></i><i class="thumb"></i><i class="cap d"></i></div>
            </div>
            <div class="move"><svg class="mu"><use href="#up"/></svg><svg class="md"><use href="#up"/></svg></div>
          </div>
          <div class="tfoot">
            <button class="sq" aria-label="添加"><svg viewBox="0 0 16 16"><path d="M6 1h4v5h5v4h-5v5H6v-5H1V6h5z" fill="#444"/></svg></button>
            <button class="sq off" aria-label="移除"><svg viewBox="0 0 16 16"><path d="M1 6h14v4H1z" fill="#aaa"/></svg></button>
            <div class="sel main"><select aria-label="主过滤器"><option>主过滤器</option></select><svg class="arr"><use href="#down"/></svg></div>
            <button class="btn prop">属性...</button>
            <button class="sq" aria-label="列"><svg><use href="#cols"/></svg></button>
            <button class="sq" aria-label="查找"><svg class="b20"><use href="#bino"/></svg></button>
          </div>
        </div>
        <footer><button class="btn">重置</button><button class="btn ok">确定</button><button class="btn">取消</button></footer>
      </section>
    </section>
  </main>

  <footer class="status">
    <button class="stb" aria-label="模型树"><svg><use href="#treeic"/></svg></button>
    <svg class="s1"><use href="#globe"/></svg><svg class="s2"><use href="#sheet"/></svg>
    <p>WORM_GEAR_CYLINDER_LEFT 重新生成已完成，并带有非典型的特征或元件状况: 失败: 1。 失败的子项: 39。</p>
    <div class="sr1"><svg><use href="#sync"/></svg><span class="fl"><svg><use href="#flag"/></svg><em>1</em></span></div>
    <div class="sr2"><button aria-label="查找"><svg class="b"><use href="#bino"/></svg></button><button class="dd" aria-label="选项"><svg class="arr"><use href="#down"/></svg></button></div>
    <div class="sel geo"><select aria-label="过滤器"><option>几何</option></select><svg class="arr"><use href="#down"/></svg></div>
  </footer>
  <div class="black"></div>
</div>

<div class="wm" aria-hidden="true">
  <svg viewBox="0 0 60 60"><ellipse cx="23" cy="22" rx="23" ry="14" transform="rotate(38 23 22)" fill="none" stroke="#a3b4c4" stroke-width="4"/><path d="M40 20q16-2 16 12T42 53q-8 4-12 0 16-2 20-14t-10-19z" fill="#e09aa2"/><path d="M12 32q-6 12 4 16-2-8 4-12 12 2 22-2Q22 32 12 50q-8-8 0-18z" fill="#c4cfd8"/></svg>
  <div><strong>野火论坛</strong><span>www.proewildfire.cn</span></div>
</div>

<svg class="ink" aria-hidden="true">
  <g fill="none" stroke="#f00" stroke-width="6" stroke-linecap="round" stroke-linejoin="round">
    <path d="M485 685 479 673 466 650 450 630 441 608 432 587 424 573 418 533 413 490V467L420 461 434 457H463L511 464 535 473 559 485 571 491 587 507 604 528 623 547 635 565 654 583 672 610 706 638 725 652 744 661 792 664 854 678 907 682 936 689 968 696 970 707 979 740 980 767 975 785 965 805Q955 820 936 828L912 836 849 843 763 844 748 837 732 815 722 793 710 775Q700 762 686 757L648 744 620 738 600 727 593 710 586 700 569 693H502L495 687"/>
    <path d="M504 917 507 893 524 857 538 823 574 760 598 723 605 705M512 749 538 740 567 727 591 717 610 714 613 730 620 747 634 773 640 788"/>
    <path stroke-width="9" d="M505 911 508 896"/>
    <path d="M177 704 160 710 146 720 137 724 165 727 197 731M230 720H145"/>
    <path d="M137 724 150 719 165 724z"/>
    <path d="M1389 701 1374 704 1363 709 1348 711H1269L1240 703 1227 700 1174 693 1153 682 1138 663 1132 637V582L1146 547 1161 503 1162 487 1169 470 1182 457 1215 456 1260 455H1367L1378 467 1390 478 1393 497V573L1388 590 1378 617 1371 657 1368 683 1367 713 1371 725 1381 729"/>
  </g>
</svg>
</body>
</html>
```

FILE: styles.css
```css
* { box-sizing: border-box; }
html, body { margin: 0; height: 100%; }
body, button, select, input { font-family: "Noto Sans", "Noto Sans CJK SC", sans-serif; font-size: 12px; line-height: 16px; color: #444; }
button { border: 0; padding: 0; margin: 0; background: none; white-space: nowrap; }
svg { flex: none; display: block; width: 16px; height: 16px; }
.defs { position: absolute; width: 0; height: 0; }
.arr { width: 8px; height: 5px; color: #555; }
.arr.dim { color: #aaa; }
.app { display: flex; flex-direction: column; min-height: 100vh; background: #e2e2e2; }

/* title bar */
.titlebar { display: flex; align-items: center; height: 32px; padding: 0 11px 4px; }
.quick { display: flex; align-items: center; flex: 1 0 0; height: 28px; }
.q { width: 24px; height: 24px; display: grid; place-items: center; }
.q .s12 { width: 12px; height: 12px; }
.q .s10 { width: 10px; height: 8px; }
.q:first-child { width: 18px; }
.q.more { width: 10px; }
.quick .arr { margin: 0 4px 0 2px; }
.flip svg { transform: scaleX(-1); }
.bar { width: 1px; height: 24px; background: #aaa; margin: 0 3px 0 11px; }
.bar.end { margin: 0 7px 0 0; }
.titlebar h1 { margin: 0; font-weight: 400; font-size: 13px; line-height: 18px; color: #b0b3b5; }
.winctl { flex: 1 0 0; display: flex; justify-content: flex-end; gap: 14px; }
.winctl svg, .dctl svg { width: 12px; height: 12px; }

/* ribbon tabs */
.tabs { display: flex; gap: 1px; height: 26px; border-bottom: 1px solid #c6c6c6; }
.tab { width: 70px; height: 26px; background: #cbcfd2; font-size: 15px; line-height: 22px; padding-bottom: 2px; }
.tab.file { width: 80px; background: #6a6a6a; color: #fff; margin-right: -1px; }
.tab.on { width: 72px; margin-right: -1px; background: #f8f8f8; color: #333; border-top: 1px solid #a3a3a3; }
.tab.wide { width: 100px; }
.help { margin-left: auto; display: flex; align-items: center; gap: 8px; padding: 0 4px 8px 0; }
.help .arr { margin: 0 -1px; }

/* ribbon */
.ribbon { display: flex; border-bottom: 1px solid #999; }
.group { display: flex; flex-direction: column; border-right: 1px solid #bbb; }
.group.rest { flex: 1; border: 0; }
.gbody { height: 87px; display: flex; background: #f8f8f8; padding-top: 2px; }
.glabel { height: 25px; background: #edeeef; display: flex; align-items: center; justify-content: center; gap: 4px; }
.g1 { width: 336px; } .g2 { width: 235px; } .g3 { width: 195px; } .g4 { width: 73px; }
.big { display: flex; flex-direction: column; align-items: center; padding-top: 5px; line-height: 17px; }
.big svg { width: 32px; height: 32px; margin-bottom: 8px; }
.big span { white-space: normal; max-width: 52px; }
.big.first { width: 59px; padding-left: 3px; }
.big.ref { width: 66px; }
.big.find { width: 30px; }
.b60 { width: 60px; } .b52 { width: 52px; } .b42 { width: 42px; padding-left: 4px; }
.col { display: flex; flex-direction: column; align-items: flex-start; gap: 2px; }
.c1 { width: 80px; } .c2 { margin-left: 5px; } .u1 { width: 100px; } .u1, .u4 { margin-left: 3px; }
.it { height: 26px; display: flex; align-items: center; gap: 4px; padding: 0 3px; border: 1px solid transparent; }
.it b { width: 16px; font-size: 14px; }
.it .arr { margin-left: 2px; }
.it.sel-on { background: #dfe1e3; border-color: #b0b0b0; }
.it:disabled { color: #b0b0b0; }
.vsep { width: 1px; height: 67px; margin-top: 8px; background: #ddd; margin-left: 1px; }

/* work area */
.work { flex: 1; display: flex; }
.side { width: 312px; display: flex; flex-direction: column; background: #edeff0; border-right: 1px solid #999; box-shadow: inset -3px 0 #d2d4d6; padding-bottom: 5px; }
.stabs { display: flex; height: 30px; background: #cbcccd; border-top: 2px solid #999; }
.stab { display: flex; align-items: center; gap: 4px; background: #d8dbdb; color: #777; border: solid #aaa; border-width: 0 1px 1px 0; padding-left: 8px; }
.stab svg { width: 18px; height: 20px; }
.stab.on { width: 76px; background: #edeff0; color: #444; border-bottom: 0; padding-left: 9px; }
.stab.f { width: 112px; } .stab.v { width: 76px; }
.stab.v svg { height: 16px; }
.shead { display: flex; align-items: center; height: 28px; padding: 0 11px 0 28px; }
.shead span { margin-right: auto; }
.i20 { width: 16px; height: 20px; margin: 0 7px 0 10px; }
.i20.w { margin-right: 9px; }
.i20.h { width: 20px; margin: 0 0 0 12px; }
.shead .arr { margin-left: 2px; }
.tree { flex: 1; list-style: none; margin: 0 7px 0 8px; padding: 0; background: #fdfdfd; border-top: 1px solid #ccd0d3; }
.tree li { display: flex; align-items: center; height: 24px; padding-left: 24px; white-space: nowrap; }
.tree li.x { padding-left: 10px; }
.tree li.root { padding-left: 4px; color: #fb4141; }
.tree .ic { margin-right: 5px; color: #7a5c30; }
.tree .ex { width: 8px; height: 10px; margin-right: 6px; }
.tree .mark { width: 8px; height: 8px; margin: 0 1px 8px 0; }
.tree .off { color: #bbb; }
.tree .off .ic { background: #e2e2e2; color: #c2bda9; }
.tree .root .ic { width: 14px; }
.tree .root .mark { margin-left: 2px; margin-right: 2px; }
.tree .bad { color: #fb4141; font-weight: 700; }
.tree .bad .mark { margin-right: 2px; }

.view { flex: 1; position: relative; background: #e8eaed; overflow: hidden; min-width: 0; }
.scene { position: absolute; inset: 0; width: 100%; height: 100%; }
.vbar { position: absolute; left: 656px; top: 7px; height: 32px; display: flex; align-items: center; padding: 0 4px 2px 3px; gap: 2px; background: #f8f8f8; border: 1px solid #a0a0a0; }
.vbar button { position: relative; width: 24px; height: 24px; display: grid; place-items: center; border: 1px solid transparent; }
.vbar button.on { background: #dfe1e3; border-color: #aaa; }
.vbar button.m { width: 25px; }
.vbar .m::after { content: ""; position: absolute; right: 0; bottom: 0; border: 2px solid #555; border-left-color: transparent; border-top-color: transparent; }

/* parameters window */
.dialog { position: absolute; left: 817px; top: 108px; width: 711px; background: #eeeff1; border: 2px solid #fafafa; }
.dialog > header { display: flex; align-items: center; height: 30px; background: #e6e7e8; padding: 0 8px; }
.dialog h2 { flex: 1; margin: 0; padding-left: 50px; text-align: center; font-size: 12px; font-weight: 400; color: #888; }
.dctl { display: flex; gap: 8px; }
.dmenu { display: flex; gap: 17px; height: 33px; padding-left: 8px; border-bottom: 1px solid #c6c8ca; }
.dmenu button { color: #bbb; font-size: 13px; }
fieldset { display: flex; align-items: center; gap: 4px; height: 63px; margin: 17px 10px 0; padding: 0 11px 5px 12px; border: 1px solid #c6c8ca; min-width: 0; }
legend { padding: 0 4px; color: #111; }
.sel { position: relative; display: flex; align-items: center; height: 25px; background: #f8f8f8; border: 1px solid #aaa; }
.sel select { appearance: none; flex: 1; width: 100%; height: 23px; border: 0; background: none; padding: 0 20px 0 7px; border-radius: 0; }
.sel .arr { position: absolute; right: 3px; top: 9px; pointer-events: none; }
.sel::after { content: ""; position: absolute; right: 14px; top: 0; bottom: 0; border-left: 1px solid #aaa; }
.sel .lead { width: 14px; margin-left: 8px; }
.sel .lead + select { padding-left: 1px; }
.w1 { width: 248px; }
.w2 { flex: 1; }
.sq { width: 28px; height: 28px; display: grid; place-items: center; border: 1px solid #aaa; background: #f8f8f8; }
.sq.off { background: #dfe1e3; border-color: #ccc; }
.ptr { width: 12px; height: 18px; }
.b20 { width: 20px; height: 20px; }
.split { height: 6px; margin: 11px 10px 4px; border: 0; border-top: 1px solid #fff; border-bottom: 2px solid #bbc0c2; }
.panel { margin: 0 10px; padding: 3px 9px 7px 7px; border: 1px solid #c6c8ca; }
.filter { display: flex; align-items: center; padding-left: 2px; }
.filter label { width: 52px; }
.grow { flex: 1; margin-right: 8px; }
.btn { width: 60px; height: 25px; background: #f8f8f8; border: 1px solid #aaa; text-align: center; }
.filter .btn { width: 65px; }
.tarea { display: flex; margin-top: 3px; }
.tframe { position: relative; width: 647px; border: 1px solid #aaa; overflow: hidden; background: #fff; }
table { width: 645px; table-layout: fixed; border-collapse: separate; border-spacing: 0; }
col { width: 71px; } col.gut { width: 17px; } col.last { width: 60px; }
th { height: 23px; padding: 0 0 0 10px; background: #f9f9f9; border: solid #ccd0d2; border-width: 0 1px 1px 0; font-weight: 400; text-align: left; color: #222; white-space: nowrap; overflow: hidden; }
td { height: 26px; padding: 0 3px; border: solid #e6eaec; border-width: 0 1px 1px 0; color: #888; white-space: nowrap; overflow: hidden; }
th:first-child, td:first-child { background: #d8d8d8; border-right-color: #ccc; }
td.v, td.a { color: #000; }
td.c { text-align: center; line-height: 12px; }
td.a div { display: flex; align-items: center; }
td.a svg { width: 20px; height: 20px; }
td.a span { margin-left: auto; }
input[type=checkbox] { appearance: none; width: 12px; height: 12px; margin: 0; border: 1px solid #777; background: #fff; vertical-align: middle; }
input[type=checkbox]:disabled { border-color: #ccc; }
input[type=checkbox]:checked::after { content: ""; display: block; width: 4px; height: 8px; margin: -1px 0 0 3px; border: solid #bbb; border-width: 0 1px 1px 0; transform: rotate(40deg); }
.hsb { display: flex; height: 16px; background: #dddfe1; }
.hsb i { display: block; }
.gutf { width: 17px; background: #d8d8d8; }
.cap { display: grid; place-items: center; width: 15px; background: #f8f8f8; border: 1px solid #ddd; font-style: normal; }
.cap::after { content: ""; display: block; margin: 4px; border: 4px solid transparent; }
.cap.l::after { border-right-color: #999; margin: 3px 0 0 1px; }
.cap.r::after { border-left-color: #999; margin: 3px 0 0 5px; }
.hsb .thumb { width: 501px; background: #f8f8f8; border: 1px solid #bbb; }
.cap.r { margin-left: auto; }
.corner { width: 15px; background: #f9f9f9; }
.vsb { position: absolute; right: 1px; top: 23px; width: 15px; height: 208px; display: flex; flex-direction: column; background: #dddfe1; }
.vsb .cap { height: 15px; }
.cap.u::after { border-bottom-color: #999; margin: 0 0 0 3px; }
.cap.d::after { border-top-color: #999; margin: 4px 0 0 3px; }
.vsb .thumb { height: 118px; margin-top: auto; background: #f8f8f8; border: 1px solid #bbb; }
.move { flex: 1; display: flex; flex-direction: column; align-items: flex-end; justify-content: center; gap: 10px; margin-right: 4px; padding-bottom: 2px; }
.move svg { width: 12px; height: 14px; color: #999; }
.move .md { color: #444; transform: rotate(180deg); }
.tfoot { display: flex; align-items: center; gap: 4px; margin-top: 1px; padding-right: 1px; }
.tfoot .main { width: 203px; margin-left: auto; }
.tfoot .prop { width: 53px; }
.dialog > footer { display: flex; gap: 8px; margin-top: 15px; padding: 10px 10px 10px; border-top: 1px solid #c6c8ca; }
.dialog > footer .btn:first-child { margin-right: auto; }
.btn.ok { background: #9fdfff; border-color: #7ccbf5; }

/* status bar */
.status { display: flex; align-items: center; height: 35px; background: #edeff0; border-top: 2px solid #999; padding: 0 18px 1px 6px; box-shadow: inset 0 2px #e0e1e2; }
.stb { width: 22px; height: 22px; display: grid; place-items: center; background: #dfe1e3; border: 1px solid #aaa; }
.s1 { margin-left: 7px; }
.s2 { margin: 0 13px 0 10px; }
.status p { margin: 0 auto 0 0; padding-left: 15px; border-left: 1px solid #aaa; line-height: 26px; font-size: 11px; position: relative; }
.status p::before { content: ""; position: absolute; left: 6px; top: 8px; width: 5px; height: 5px; border-radius: 50%; background: #16658a; }
.sr1 { display: flex; align-items: center; gap: 8px; width: 61px; height: 27px; padding-left: 4px; border-left: 1px solid #aaa; }
.fl { position: relative; }
.fl svg { width: 14px; }
.fl em { position: absolute; left: 6px; top: 5px; font-style: normal; font-size: 10px; line-height: 12px; font-weight: 700; color: #228; }
.sr2 { display: flex; align-items: center; width: 48px; height: 27px; padding-left: 2px; border: solid #aaa; border-width: 0 1px; }
.sr2 button { width: 28px; height: 24px; display: grid; place-items: center; border: 1px solid #bbb; background: #f8f8f8; }
.sr2 .dd { width: 15px; border-left: 0; }
.geo { width: 177px; margin-left: 97px; }
.black { height: 4px; background: #020610; }

/* forum mark laid over the corner of the window */
.wm { position: fixed; right: 5px; bottom: 8px; width: 206px; height: 59px; display: flex; background: rgba(255,255,255,.35); pointer-events: none; }
.wm svg { width: 60px; height: 59px; }
.wm div { flex: 1; margin-left: -2px; }
.wm strong { display: block; padding-left: 12px; font-size: 29px; line-height: 38px; color: #96cfb0; white-space: nowrap; }
.wm span { display: block; font-size: 15px; line-height: 20px; color: #c6e0da; white-space: nowrap; }
.ink { position: absolute; left: 0; top: 0; width: 100%; height: 100%; pointer-events: none; }
```
